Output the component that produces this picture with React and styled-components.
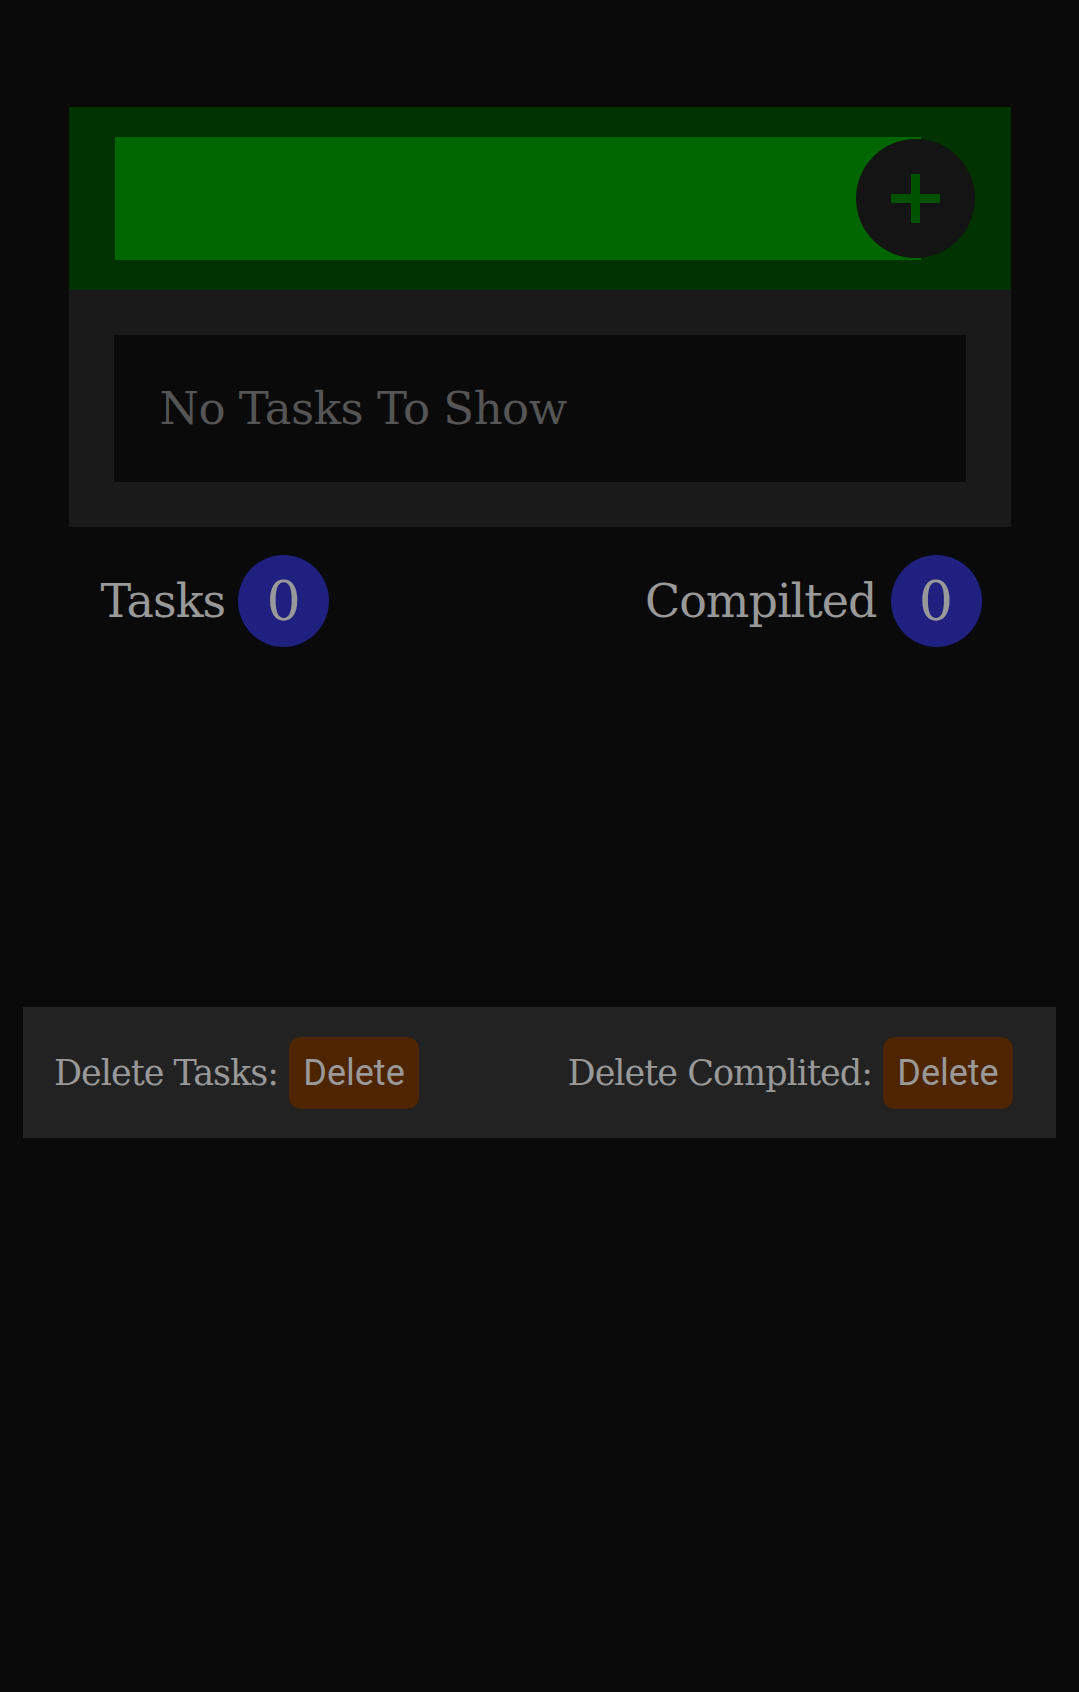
import React from 'react';
import styled, { createGlobalStyle } from 'styled-components';

const GlobalStyle = createGlobalStyle`
  html, body {
    margin: 0;
    padding: 0;
    background: #0a0a0a;
  }
  body {
    font-family: "DejaVu Serif", "Liberation Serif", serif;
    min-height: 1692px;
  }
`;

const Page = styled.div`
  padding-top: 107px;
`;

const Card = styled.div`
  width: 942px;
  margin: 0 auto;
`;

const Header = styled.form`
  display: flex;
  align-items: center;
  background: #003300;
  padding: 30px 36px 30px 46px;
`;

const TaskInput = styled.input`
  width: 806px;
  height: 123px;
  box-sizing: border-box;
  border: none;
  outline: none;
  background: #006600;
  padding: 0 20px;
  font-family: inherit;
  font-size: 40px;
  color: #ccc;
`;

const AddButton = styled.button`
  width: 119px;
  height: 119px;
  flex-shrink: 0;
  margin-left: -65px;
  border: none;
  border-radius: 50%;
  background: #141414;
  display: flex;
  align-items: center;
  justify-content: center;
  padding: 0;
  cursor: pointer;
`;

const Panel = styled.div`
  background: #1a1a1a;
  padding: 45px;
`;

const Empty = styled.div`
  height: 147px;
  display: flex;
  align-items: center;
  padding-left: 46px;
  background: #0a0a0a;
  color: #555;
  font-size: 45px;
  letter-spacing: -0.5px;
`;

const Stats = styled.div`
  display: flex;
  justify-content: space-between;
  align-items: center;
  margin-top: 28px;
  padding: 0 29px 0 32px;
`;

const Group = styled.div`
  display: flex;
  align-items: center;
  gap: ${({ gap }) => gap || 13}px;
`;

const Label = styled.span`
  color: #999;
  font-size: ${({ size }) => size}px;
  letter-spacing: -1px;
`;

const Badge = styled.span`
  width: 91px;
  height: 92px;
  border-radius: 50%;
  background: #202080;
  color: #999;
  font-size: 54px;
  display: flex;
  align-items: center;
  justify-content: center;
`;

const BottomBar = styled.div`
  width: 1033px;
  height: 131px;
  box-sizing: border-box;
  margin: 360px auto 0;
  background: #222;
  display: flex;
  justify-content: space-between;
  align-items: center;
  padding: 0 43px 0 31px;
`;

const DeleteButton = styled.button`
  width: 130px;
  height: 72px;
  border: none;
  border-radius: 12px;
  background: #4f2400;
  color: #999;
  font-family: Roboto, "Liberation Sans", sans-serif;
  font-size: 36px;
  padding: 0;
  cursor: pointer;
`;

const PlusIcon = () => (
  <svg width="49" height="49" viewBox="0 0 49 49">
    <rect x="20" y="0" width="9" height="49" fill="#005200" />
    <rect x="0" y="20" width="49" height="9" fill="#005200" />
  </svg>
);

export default function App() {
  return (
    <>
      <GlobalStyle />
      <Page>
        <Card>
          <Header onSubmit={(e) => e.preventDefault()}>
            <TaskInput type="text" />
            <AddButton type="submit">
              <PlusIcon />
            </AddButton>
          </Header>
          <Panel>
            <Empty>No Tasks To Show</Empty>
          </Panel>
          <Stats>
            <Group>
              <Label size={46}>Tasks</Label>
              <Badge>0</Badge>
            </Group>
            <Group gap={14}>
              <Label size={46}>Compilted</Label>
              <Badge>0</Badge>
            </Group>
          </Stats>
        </Card>
        <BottomBar>
          <Group gap={11}>
            <Label size={35}>Delete Tasks:</Label>
            <DeleteButton>Delete</DeleteButton>
          </Group>
          <Group gap={11}>
            <Label size={35}>Delete Complited:</Label>
            <DeleteButton>Delete</DeleteButton>
          </Group>
        </BottomBar>
      </Page>
    </>
  );
}
